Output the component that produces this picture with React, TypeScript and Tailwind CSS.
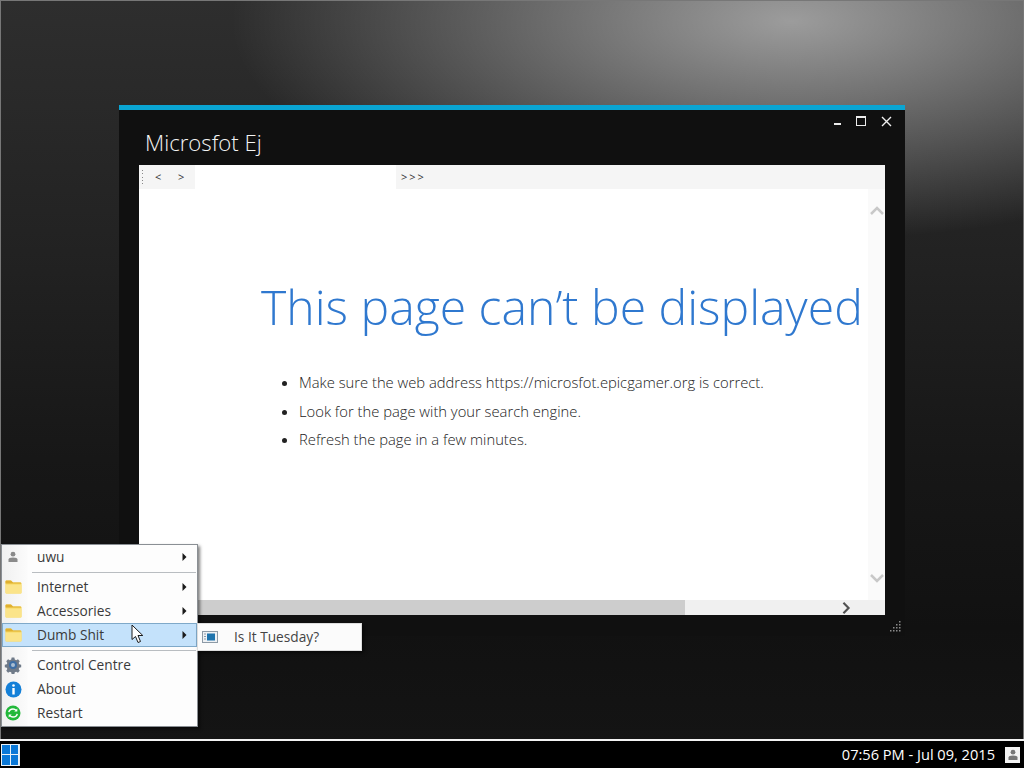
import React from "react";

const UserIcon = ({ c = "#8a8a8a" }: { c?: string }) => (
  <svg width="12" height="12" viewBox="0 0 12 12">
    <circle cx="6" cy="3.2" r="2.4" fill={c} />
    <path d="M1.5 11V8.6C1.5 7.2 3 6.4 6 6.4s4.500.8 4.5 2.200V11z" fill={c} />
  </svg>
);

const Folder = () => (
  <svg width="17" height="14" viewBox="0 0 17 14">
    <path d="M0.500 1.500C0.500 0.800 1 0.500 1.500 0.500H6L8 2.500H15.500C16.200 2.500 16.500 3 16.500 3.500V12.500C16.500 13.200 16 13.500 15.500 13.500H1.500C1 13.500 0.500 13.200 0.500 12.500Z" fill="#f6d860" />
    <path d="M0.500 4.500H16.500V12.500C16.500 13.200 16 13.500 15.500 13.500H1.500C1 13.500 0.500 13.200 0.500 12.500Z" fill="#fbe48a" />
    <path d="M0.500 1.500C0.500 0.800 1 0.500 1.500 0.500H6L8 2.500H15.500L16.500 3.500H0.500Z" fill="#e0b030" />
  </svg>
);

const Gear = () => (
  <svg width="18" height="18" viewBox="0 0 18 18">
    <path d="M7.500 0.800h3l.5 2.200 1.500.7 2-1.100 2 2.200-1.200 1.900.6 1.600 2.200.5v2.600l-2.200.6-.6 1.500 1.200 2-2 2.100-2-1.200-1.500.7-.5 2.200h-3l-.5-2.200-1.500-.7-2 1.200-2-2.100 1.200-2-.6-1.500-2.200-.6V8.800l2.200-.5.6-1.600-1.200-1.900 2-2.200 2 1.100 1.500-.7z" fill="#6f7a88" transform="translate(0.900 0.900) scale(0.9)" />
    <circle cx="9" cy="9" r="4" fill="#3d6ea5" />
    <circle cx="9" cy="9" r="2" fill="#a9bdd2" />
  </svg>
);

const Info = () => (
  <svg width="17" height="17" viewBox="0 0 17 17">
    <circle cx="8.500" cy="8.500" r="8" fill="#1480d8" />
    <circle cx="8.500" cy="4.500" r="1.300" fill="#fff" />
    <rect x="7.300" y="7" width="2.400" height="6.500" fill="#fff" />
  </svg>
);

const Refresh = () => (
  <svg width="16" height="16" viewBox="0 0 16 16">
    <circle cx="8" cy="8" r="7.500" fill="#22b83a" />
    <path d="M3.800 7.200C4.200 5.200 6 4 8 4c1.300 0 2.400.5 3.100 1.400M12.200 8.800C11.800 10.800 10 12 8 12c-1.300 0-2.400-.5-3.100-1.400" stroke="#fff" strokeWidth="1.500" fill="none" />
    <path d="M12.300 3.500v3h-3zM3.700 12.500v-3h3z" fill="#fff" />
  </svg>
);

const Arrow = () => (
  <svg width="5" height="8" viewBox="0 0 5 8">
    <path d="M0.500 0L4.500 4L0.500 8Z" fill="#1a1a1a" />
  </svg>
);

const Row = ({ icon, label, arrow, active }: { icon: React.ReactNode; label: string; arrow?: boolean; active?: boolean }) => (
  <div className={`flex h-[24px] items-center ${active ? "border border-[#7fa9c9] bg-[#c4e2fb]" : "border border-transparent"}`}>
    <span className="flex w-[20px] justify-center">{icon}</span>
    <span className="ml-[14px] flex-1 text-[13.700px] leading-none text-[#3a3a3a]">{label}</span>
    {arrow && (
      <span className="mr-[9px] flex">
        <Arrow />
      </span>
    )}
  </div>
);

const Sep = () => (
  <div className="flex h-[6px] items-center">
    <div className="ml-[30px] mr-px h-px flex-1 bg-[#b9bdc1]" />
  </div>
);

const Chevron = ({ dir, color, size = 14 }: { dir: "up" | "down" | "right"; color: string; size?: number }) => {
  const d = dir === "up" ? "M1 10L7 4L13 10" : dir === "down" ? "M1 4L7 10L13 4" : "M4 1L10 7L4 13";
  return (
    <svg width={size} height={size} viewBox="0 0 14 14">
      <path d={d} fill="none" stroke={color} strokeWidth="2.500" />
    </svg>
  );
};

export default function App() {
  return (
    <div className="relative flex h-[768px] w-[1024px] flex-col overflow-hidden bg-black font-['Open_Sans','Noto_Sans',sans-serif]">
      <div className="relative flex-1 border-l border-r border-t border-[#777] bg-[radial-gradient(ellipse_560px_220px_at_790px_20px,rgba(255,255,255,0.53)_0%,rgba(255,255,255,0)_100%),linear-gradient(180deg,#2e2e2e_0%,#222222_34%,#171717_62%,#111111_85%,#141414_100%)]">
        {/* window */}
        <div className="absolute left-[118px] top-[104px] flex h-[531px] w-[786px] flex-col border-t-[5px] border-[#0aa5d3] bg-[#101010] pl-[20px] pr-[20px]">
          <div className="flex h-[55px] items-start justify-between">
            <span className="ml-[6px] mt-[18px] text-[22.200px] font-light leading-[30px] text-[#f4f4f4]">Microsfot Ej</span>
            <div className="-mr-[7px] mt-[0px] flex h-[12px] items-center gap-[14px] pt-[10px] text-[#e8e8e8]">
              <svg width="8" height="10" viewBox="0 0 8 10">
                <rect x="0" y="7" width="7" height="2" fill="#ececec" />
              </svg>
              <svg width="11" height="10" viewBox="0 0 11 10">
                <rect x="0.500" y="0.500" width="9" height="9" fill="none" stroke="#ececec" />
                <rect x="0" y="0" width="10" height="2" fill="#ececec" />
              </svg>
              <svg width="11" height="11" viewBox="0 0 11 11">
                <path d="M1 1L10 10M10 1L1 10" stroke="#f0f0f0" strokeWidth="1.400" />
              </svg>
            </div>
          </div>
          <div className="flex h-[450px] flex-col bg-white">
            <div className="flex h-[24px] items-center bg-[#f5f5f5] text-[11px] text-[#333]">
              <span className="ml-[3px] flex h-[14px] w-[2px] flex-col justify-between">
                <i className="h-px w-px bg-[#888]" />
                <i className="h-px w-px bg-[#888]" />
                <i className="h-px w-px bg-[#888]" />
                <i className="h-px w-px bg-[#888]" />
                <i className="h-px w-px bg-[#888]" />
              </span>
              <span className="ml-[11px] w-[23px]">&lt;</span>
              <span className="w-[17px]">&gt;</span>
              <span className="h-[24px] w-[201px] bg-white" />
              <span className="ml-[5px] tracking-[2px]">&gt;&gt;&gt;</span>
            </div>
            <div className="flex flex-1">
              <div className="flex-1 pl-[122px] pt-[86px]">
                <h1 className="text-[48.150px] font-light leading-[64px] whitespace-nowrap text-[#2f78cf]">This page can’t be displayed</h1>
                <ul className="ml-[38px] mt-[29px] list-disc pl-0 text-[14.780px] font-light leading-[28.500px] text-[#222]">
                  <li>Make sure the web address https://microsfot.epicgamer.org is correct.</li>
                  <li>Look for the page with your search engine.</li>
                  <li>Refresh the page in a few minutes.</li>
                </ul>
              </div>
              <div className="flex w-[17px] flex-col items-center justify-between bg-[#fafafa] py-[15px]">
                <Chevron dir="up" color="#c8c8c8" />
                <Chevron dir="down" color="#c8c8c8" />
              </div>
            </div>
            <div className="flex h-[15px] items-center bg-[#f0f0f0]">
              <div className="h-[15px] w-[546px] bg-[#cdcdcd]" />
              <div className="ml-[155px] flex">
                <Chevron dir="right" color="#505050" size={12} />
              </div>
            </div>
          </div>
          <div className="flex flex-1 justify-end pt-[5px]">
            <svg className="-mr-[17px]" width="12" height="12" viewBox="0 0 12 12">
              <g fill="#8a8a8a">
                <rect x="9" y="1" width="1.500" height="1.500" />
                <rect x="6" y="4" width="1.500" height="1.500" />
                <rect x="9" y="4" width="1.500" height="1.500" />
                <rect x="3" y="7" width="1.500" height="1.500" />
                <rect x="6" y="7" width="1.500" height="1.500" />
                <rect x="9" y="7" width="1.500" height="1.500" />
                <rect x="0" y="10" width="1.500" height="1.500" />
                <rect x="3" y="10" width="1.500" height="1.500" />
                <rect x="6" y="10" width="1.500" height="1.500" />
                <rect x="9" y="10" width="1.500" height="1.500" />
              </g>
            </svg>
          </div>
        </div>

        {/* start menu */}
        <div className="absolute left-0 top-[543px] h-[183px] w-[197px] border border-[#8a8f94] bg-[linear-gradient(90deg,#f0f0f0_0,#fbfbfb_25px,#fdfdfd_26px)] shadow-[2px_2px_3px_rgba(0,0,0,0.5)]">
          <Row icon={<UserIcon />} label="uwu" arrow />
          <Sep />
          <Row icon={<Folder />} label="Internet" arrow />
          <Row icon={<Folder />} label="Accessories" arrow />
          <Row icon={<Folder />} label="Dumb Shit" arrow active />
          <Sep />
          <Row icon={<Gear />} label="Control Centre" />
          <Row icon={<Info />} label="About" />
          <Row icon={<Refresh />} label="Restart" />
        </div>

        {/* submenu */}
        <div className="absolute left-[196px] top-[622px] flex h-[28px] w-[165px] items-center border border-[#ddd] bg-[#fbfbfb] shadow-[2px_2px_3px_rgba(0,0,0,0.5)]">
          <svg className="ml-[4px]" width="16" height="12" viewBox="0 0 16 12">
            <rect x="0.500" y="0.500" width="15" height="11" fill="#eef1f4" stroke="#8d9aa6" />
            <rect x="5" y="2.500" width="8" height="7" fill="#1f74ad" />
            <rect x="2" y="2.500" width="2" height="1" fill="#8d9aa6" />
            <rect x="2" y="5" width="2" height="1" fill="#8d9aa6" />
            <rect x="2" y="7.500" width="2" height="1" fill="#8d9aa6" />
          </svg>
          <span className="ml-[16px] text-[13.700px] leading-none text-[#444]">Is It Tuesday?</span>
        </div>

        {/* cursor */}
        <svg className="absolute left-[130px] top-[623px]" width="14" height="20" viewBox="0 0 14 20">
          <path d="M1 1V15.500L4.500 12.500L7 18.500L9.500 17.500L7 11.500H11.800Z" fill="#fff" stroke="#1c1c1c" strokeWidth="1" />
        </svg>
      </div>

      {/* taskbar */}
      <div className="flex h-[29px] items-center border-t-2 border-[#f2f2f2] bg-black">
        <div className="ml-px grid h-[22px] w-[19px] grid-cols-2 gap-px border-r border-[#dfe8f0] bg-[#e8f1f8] p-px">
          <i className="bg-[#0a78d7]" />
          <i className="bg-[#0a78d7]" />
          <i className="bg-[#0a78d7]" />
          <i className="bg-[#0a78d7]" />
        </div>
        <span className="ml-auto text-[14.600px] leading-none whitespace-nowrap text-white">07:56 PM - Jul 09, 2015</span>
        <span className="ml-[10px] mr-[4px] flex h-[16px] w-[15px] items-center justify-center bg-[#f4f4f4]">
          <UserIcon c="#777" />
        </span>
      </div>
    </div>
  );
}
